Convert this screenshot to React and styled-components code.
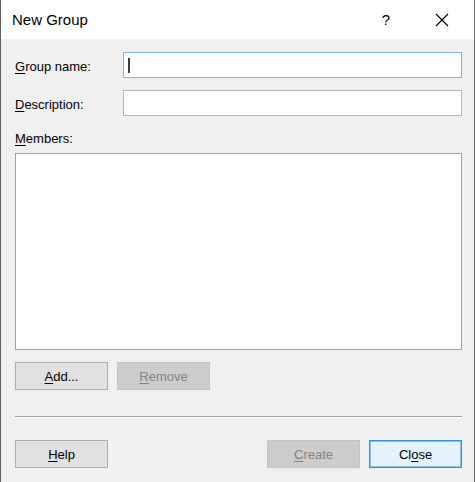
import React from 'react';
import styled, { createGlobalStyle } from 'styled-components';

const Global = createGlobalStyle`
  html, body {
    margin: 0;
    padding: 0;
    background: #f0f0f0;
  }
  * { box-sizing: border-box; }
`;

const Window = styled.div`
  width: 475px;
  height: 482px;
  display: flex;
  flex-direction: column;
  background: #f0f0f0;
  border-left: 1px solid #5f5f5f;
  border-right: 1px solid #6e6e6e;
  font-family: "Segoe UI", "Liberation Sans", Arial, sans-serif;
  color: #000;
`;

const TitleBar = styled.div`
  height: 39px;
  background: #fff;
  display: flex;
  align-items: center;
  padding-left: 11px;
`;

const Title = styled.div`
  flex: 1;
  font-size: 15px;
  padding-bottom: 1px;
`;

const TitleButton = styled.div`
  width: ${p => p.$w}px;
  height: 39px;
  display: flex;
  align-items: center;
  justify-content: center;
  font-size: 15px;
`;

const Body = styled.div`
  flex: 1;
  display: flex;
  flex-direction: column;
  padding: 13px 12px 0 14px;
`;

const FieldRow = styled.div`
  display: grid;
  grid-template-columns: 108px 1fr;
  align-items: center;
  margin-bottom: 12px;
`;

const Label = styled.label`
  font-size: 13px;
  display: block;
  padding-top: 2px;
  u { text-underline-offset: 2px; }
`;

const Input = styled.div`
  height: 26px;
  background: #fff;
  border: 1px solid ${p => (p.$focus ? '#7eb4ea' : '#b8b8b8')};
  display: flex;
  align-items: center;
  padding-left: 4px;
`;

const Caret = styled.span`
  width: 2px;
  height: 15px;
  background: #3c3c3c;
`;

const MembersLabel = styled(Label)`
  margin-top: 1px;
  height: 24px;
`;

const ListBox = styled.div`
  height: 197px;
  background: #fff;
  border: 1px solid #a0a0a0;
`;

const ButtonRow = styled.div`
  display: flex;
  gap: 9px;
  margin-top: ${p => p.$top || 0}px;
`;

const Button = styled.div`
  width: 93px;
  height: 28px;
  display: flex;
  align-items: center;
  justify-content: center;
  font-size: 13px;
  padding-top: 1px;
  background: ${p => (p.$disabled ? '#cccccc' : p.$default ? '#e5f1fb' : '#e1e1e1')};
  border: 1px solid ${p => (p.$disabled ? '#c4c4c4' : p.$default ? '#3b8fde' : '#adadad')};
  box-shadow: ${p => (p.$default ? 'inset 0 0 0 1px #86bcee' : 'none')};
  color: ${p => (p.$disabled ? '#838383' : '#000')};
  u { text-underline-offset: 2px; }
`;

const Separator = styled.div`
  height: 1px;
  background: #a0a0a0;
  border-bottom: 1px solid #fff;
  box-sizing: content-box;
  margin-top: 26px;
`;

const Spacer = styled.div`
  flex: 1;
`;

function CloseIcon() {
  return (
    <svg width="16" height="16" viewBox="0 0 16 16">
      <path d="M2 2 L14 14 M14 2 L2 14" stroke="#000" strokeWidth="1.1" fill="none" />
    </svg>
  );
}

export default function App() {
  return (
    <Window>
      <Global />
      <TitleBar>
        <Title>New Group</Title>
        <TitleButton $w={48}>?</TitleButton>
        <TitleButton $w={64}>
          <CloseIcon />
        </TitleButton>
      </TitleBar>
      <Body>
        <FieldRow>
          <Label><u>G</u>roup name:</Label>
          <Input $focus>
            <Caret />
          </Input>
        </FieldRow>
        <FieldRow>
          <Label><u>D</u>escription:</Label>
          <Input />
        </FieldRow>
        <MembersLabel><u>M</u>embers:</MembersLabel>
        <ListBox />
        <ButtonRow $top={12}>
          <Button><span><u>A</u>dd...</span></Button>
          <Button $disabled><span><u>R</u>emove</span></Button>
        </ButtonRow>
        <Separator />
        <ButtonRow $top={22}>
          <Button><span><u>H</u>elp</span></Button>
          <Spacer />
          <Button $disabled><span><u>C</u>reate</span></Button>
          <Button $default><span>Cl<u>o</u>se</span></Button>
        </ButtonRow>
      </Body>
    </Window>
  );
}
